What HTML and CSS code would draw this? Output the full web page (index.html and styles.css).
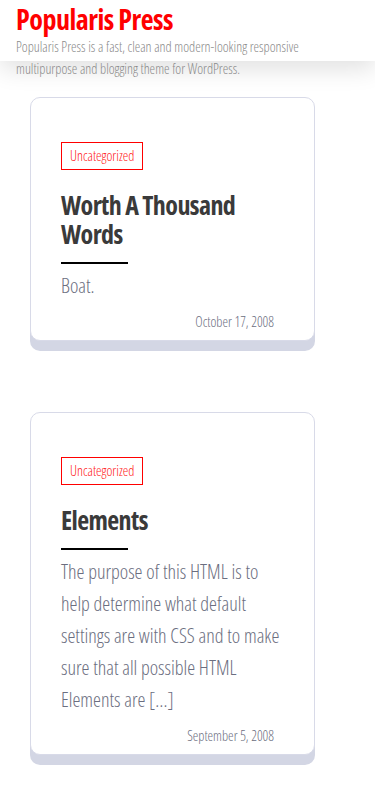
FILE: index.html
```html
<!DOCTYPE html>
<html lang="en">
<head>
    <meta charset="UTF-8">
    <meta name="viewport" content="width=device-width, initial-scale=1.0">
    <title>Popularis Press</title>
    <link rel="stylesheet" href="styles.css">
</head>
<body>
    <header class="site-header">
        <h1 class="site-title">Popularis Press</h1>
        <p class="site-description">Popularis Press is a fast, clean and modern-looking responsive multipurpose and blogging theme for WordPress.</p>
    </header>

    <main class="posts">
        <article class="post-card">
            <span class="cat-link">Uncategorized</span>
            <h2 class="post-title">Worth A Thousand Words</h2>
            <div class="post-excerpt">Boat.</div>
            <div class="post-date">October 17, 2008</div>
        </article>

        <article class="post-card">
            <span class="cat-link">Uncategorized</span>
            <h2 class="post-title">Elements</h2>
            <div class="post-excerpt">The purpose of this HTML is to help determine what default settings are with CSS and to make sure that all possible HTML Elements are [&hellip;]</div>
            <div class="post-date">September 5, 2008</div>
        </article>
    </main>
</body>
</html>
```

FILE: styles.css
```css
body {
    margin: 0;
    background: #fff;
    font-family: "Open Sans", sans-serif;
    font-stretch: condensed;
    font-weight: 300;
}
.site-header {
    height: 61px;
    padding: 0 16px;
    background: #fff;
    box-shadow: 0 8px 24px rgba(0,0,0,0.12);
    position: relative;
    z-index: 1;
}
.site-title {
    margin: 0;
    padding-top: 2px;
    font-size: 28px;
    line-height: 34px;
    font-weight: 700;
    letter-spacing: -0.5px;
    color: #ff0000;
}
.site-description {
    margin: 0;
    font-size: 14px;
    line-height: 22px;
    color: #8a8a8a;
}
.posts {
    padding: 36px 60px 40px 30px;
}
.post-card {
    display: flex;
    flex-direction: column;
    align-items: flex-start;
    padding: 44px 34px 8px 30px;
    margin-bottom: 71px;
    background: #fff;
    border: 1px solid #d8dae8;
    border-radius: 10px;
    box-shadow: 0 10px 0 #d3d6e4;
}
.cat-link {
    padding: 0 8px;
    border: 1px solid #ff0000;
    font-size: 14px;
    line-height: 26px;
    color: #ff2020;
}
.post-title {
    margin: 21px 0 0;
    font-size: 26px;
    line-height: 29px;
    font-weight: 700;
    letter-spacing: -0.6px;
    color: #3a3a3a;
}
.post-title::after {
    content: "";
    display: block;
    width: 67px;
    height: 2px;
    margin-top: 13px;
    background: #000;
}
.post-excerpt {
    margin-top: 6px;
    font-size: 20px;
    line-height: 32px;
    color: #6b6e80;
}
.post-date {
    align-self: flex-end;
    margin: 10px 6px 0 0;
    font-size: 14px;
    line-height: 20px;
    color: #6b6e80;
}
```
